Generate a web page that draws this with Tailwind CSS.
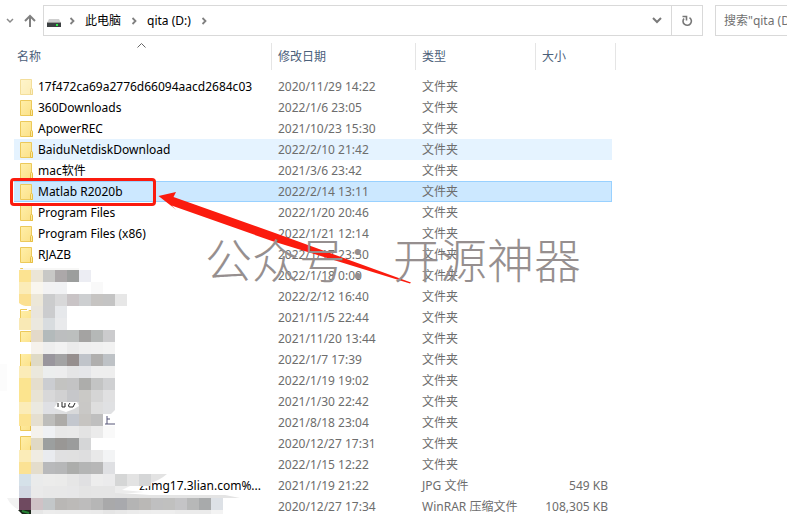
<!DOCTYPE html>
<html lang="zh-CN">
<head>
<meta charset="utf-8">
<title>qita (D:)</title>
<script src="https://cdn.jsdelivr.net/npm/@tailwindcss/browser@4"></script>
</head>
<body class="relative h-screen overflow-hidden bg-white font-['Noto_Sans','Noto_Sans_CJK_SC',sans-serif] text-xs text-black">
<svg class="absolute size-0">
  <defs>
    <linearGradient id="fg" x1="0" y1="0" x2="1" y2="1"><stop offset="0" stop-color="#ffefa9"/><stop offset="1" stop-color="#fbe087"/></linearGradient>
    <symbol id="folder" viewBox="0 0 13 16"><path d="M.5.5h11v9.500l1 1v4.500H.5z" fill="url(#fg)" stroke="#ecc95a"/><path d="M10.500 15.500V10.500q0-1 1-1t1 1v5z" fill="#fde9a0" stroke="#e6bf45"/></symbol>
  </defs>
</svg>

<header class="flex pt-[5px]">
  <nav class="flex w-[43px] shrink-0 items-center gap-2 pl-1.5">
    <button aria-label="最近浏览的位置"><svg class="block" width="8" height="6" viewBox="0 0 8 6" fill="none" stroke="#8a8a8a" stroke-width="1.500"><path d="M1 1l3 3 3-3"/></svg></button>
    <button aria-label="上移"><svg class="block" width="15" height="14" viewBox="0 0 15 14" fill="none" stroke="#808080" stroke-width="2"><path d="M8 13V2M3 7l5-5 5 5"/></svg></button>
  </nav>
  <div class="flex h-[31px] flex-1 items-center border border-[#d9d9d9]">
    <svg class="mt-1 ml-[3px] shrink-0" width="14" height="10" viewBox="0 0 14 10"><path d="M2 1h10l2 4H0z" fill="#cfcfcf"/><path d="M0 4.500h14V9H0z" fill="#3c4042"/><path d="M0 4.500h14" stroke="#999"/><rect x="9" y="6" width="2" height="2" fill="#2eea4a"/></svg>
    <svg class="ml-2 shrink-0" width="6" height="8" viewBox="0 0 6 8" fill="none" stroke="#808080" stroke-width="1.800"><path d="M1.500 1l3 3-3 3"/></svg>
    <a href="#" class="ml-2.5">此电脑</a>
    <svg class="ml-2.5 shrink-0" width="6" height="8" viewBox="0 0 6 8" fill="none" stroke="#808080" stroke-width="1.800"><path d="M1.500 1l3 3-3 3"/></svg>
    <a href="#" class="ml-2.5">qita (D:)</a>
    <svg class="ml-2.5 shrink-0" width="6" height="8" viewBox="0 0 6 8" fill="none" stroke="#808080" stroke-width="1.800"><path d="M1.500 1l3 3-3 3"/></svg>
    <button class="mr-[9px] ml-auto" aria-label="以前的位置"><svg class="block" width="10" height="7" viewBox="0 0 10 7" fill="none" stroke="#7a7a7a" stroke-width="2"><path d="M1 1l4 4 4-4"/></svg></button>
    <button class="flex h-full w-[31px] items-center justify-center border-l border-[#d9d9d9]" aria-label="刷新"><svg width="12" height="12" viewBox="0 0 12 12" fill="none" stroke="#777" stroke-width="1.600"><path d="M8.500 2.600a4.200 4.200 0 1 1-5.500.8M1.500 1.500H5.500V5.500"/></svg></button>
  </div>
  <input aria-label="搜索" placeholder='搜索"qita (D:)"' class="ml-3 h-[31px] w-[72px] shrink-0 border border-r-0 border-[#d9d9d9] pl-2 placeholder:text-[#707070]">
</header>

<main class="relative pt-[7px] pl-3.5">
  <svg class="absolute top-[7px] left-[137px]" width="9" height="5" viewBox="0 0 9 5" fill="none" stroke="#666"><path d="M.5 4.500l4-4 4 4"/></svg>
  <table class="w-[602px] table-fixed border-collapse text-left">
    <colgroup><col class="w-[258px]"><col class="w-[144px]"><col class="w-[120px]"><col class="w-[76px]"><col class="w-1"></colgroup>
    <thead class="text-[#4c607a]">
      <tr class="h-[33px] align-top">
        <th class="p-0 font-normal"><div class="h-[27px] border-r border-[#e5e5e5] pl-[3px] leading-[27px]">名称</div></th>
        <th class="p-0 font-normal"><div class="h-[27px] border-r border-[#e5e5e5] pl-1.5 leading-[27px]">修改日期</div></th>
        <th class="p-0 font-normal"><div class="h-[27px] border-r border-[#e5e5e5] pl-1.5 leading-[27px]">类型</div></th>
        <th class="p-0 font-normal"><div class="h-[27px] pl-1.5 leading-[27px]">大小</div></th>
        <td class="p-0"><div class="h-[27px] border-r border-[#e5e5e5]"></div></td>
      </tr>
    </thead>
    <tbody id="files" class="text-[#6d6d6d]"></tbody>
  </table>
</main>

<svg id="mosaic" class="pointer-events-none absolute top-0 left-0" width="280" height="514" viewBox="0 0 280 514" shape-rendering="crispEdges"></svg>
<div class="pointer-events-none absolute top-[178px] left-[10px] h-[28px] w-[146px] rounded-sm border-3 border-[#fb1b0e]"></div>
<svg class="pointer-events-none absolute top-[185px] left-[155px]" width="260" height="102" viewBox="0 0 260 102"><path d="M3.500 11 21 7l-2.500 5L120 48l136 49.500-1 1L117 56 16.500 20.500 21.500 25z" fill="#fb1b0e"/></svg>
<div class="pointer-events-none absolute top-[223px] left-[205px] font-['Noto_Sans_CJK_SC',sans-serif] text-[47px] leading-[70px] font-light whitespace-nowrap text-[#968f8f]">公众号：开源神器</div>

<script>
const files = [
  ["17f472ca69a2776d66094aacd2684c03", "2020/11/29 14:22"],
  ["360Downloads", "2022/1/6 23:05"],
  ["ApowerREC", "2021/10/23 15:30"],
  ["BaiduNetdiskDownload", "2022/2/10 21:42"],
  ["mac软件", "2021/3/6 23:42"],
  ["Matlab R2020b", "2022/2/14 13:11"],
  ["Program Files", "2022/1/20 20:46"],
  ["Program Files (x86)", "2022/1/21 12:14"],
  ["RJAZB", "2022/1/17 23:50"],
  ["", "2022/1/18 0:00"],
  ["", "2022/2/12 16:40"],
  ["", "2021/11/5 22:44"],
  ["", "2021/11/20 13:44"],
  ["", "2022/1/7 17:39"],
  ["", "2022/1/19 19:02"],
  ["", "2021/1/30 22:42"],
  ["", "2021/8/18 23:04"],
  ["", "2020/12/27 17:31"],
  ["", "2022/1/15 12:22"],
  ["z.img17.3lian.com%...", "2021/1/19 21:22", "JPG 文件", "549 KB"],
  ["", "2020/12/27 17:34", "WinRAR 压缩文件", "108,305 KB"]
];
const rowBg = i => i === 3 ? "bg-[#e5f3ff]" : i === 5 ? "bg-[#cce8ff] shadow-[inset_0_1px_#99d1ff,inset_0_-1px_#99d1ff]" : "";
document.getElementById("files").innerHTML = files.map(([name, date, type = "文件夹", size = ""], i) => {
  const bg = rowBg(i);
  const icon = type === "文件夹" ? `<svg class="${i === 0 ? "opacity-60" : ""} shrink-0" width="13" height="16"><use href="#folder"/></svg>` : "";
  const last = i === 5 ? "bg-[#cce8ff] shadow-[inset_-1px_1px_#99d1ff,inset_0_-1px_#99d1ff]" : bg;
  return `<tr class="h-[21px] leading-5 whitespace-nowrap">
    <td class="p-0 ${bg}"><div class="flex items-center gap-[5px] pl-1.5 text-black ${i === 19 ? "justify-end pr-[11px]" : ""}">${icon}<span>${name}</span></div></td>
    <td class="p-0 pl-1.5 ${bg}">${date}</td>
    <td class="p-0 pl-1.5 ${bg}">${type}</td>
    <td class="p-0 pr-1 text-right ${last}">${size}</td><td class="p-0"></td></tr>`;
}).join("");

// Censoring mosaic over the file names: 12px cells, "-" leaves a cell clear.
const cells = [
  "fce391 ebe5d6 c8c8c6 aca8a9 9c9e9d ecedf3",
  "fbecb8 f9f6ee f2f2f3 f1f2f4 - - f9f9f9",
  "fbe092 ece7d8 cbcccd d8d8d9 c9c4c6 cdcfd1 c6c4c2 c4c4c4 e7e7e7",
  "- e9e5dc cbccce e6e8eb",
  "f9e9b5 ebe8de d8dcdf e9eaec",
  "- e3d9c9 b3babb bcbebf bcbfbe a4a3a2 b5b8b7 cbcbcd",
  "ffffff f6f2ec eeeeee f2f2f2 ebebeb efefef f0f0f0 f2f2f2",
  "- dfdac6 99969d a3a3a4 968f8e c0c4ca b0afae bec2c6",
  "fbecb8 ebe8dc eceeee ededee e5e5e6 e5e6e9 eeeeee eeeeee",
  "fbe490 e5decd cbcdd1 c3c3c1 c3c3c4 adadab c3c4c4 cfd0d2",
  "fce48e e8e3d4 d8d8d9 d1d1d2 c6c7ca cac9c6 d5d5d5 e0e0e1",
  "fbecb8 ebe9e0 dfe0e4 dedfe1 d8d9da c9c8c6 dedede e0e1e3",
  "fce391 e5dfd0 bdbdbb adaba8 c3c7ce c6c4c1 bfbfbf -",
  "- f5f2ec eff1f4 e8e8e8 e9e9e9 e3e3e3 ebebeb f9f9f9",
  "- e0d9c5 9c9f9f 999795 9b9c9c d5d6d7",
  "fbecb8 f0ece2 e9ebef e0e0e1 e0e0e0 dededf e9e9e9 f3f4f5",
  "fbe294 e4ddcc b8b9bb b6b7b8 acadab b4b5b5 b7b7b7 dfe0e3",
  "d5e1e9 eaebeb ececeb ebebea e6e6e6 e0e0e2 ededed ebebec d5d6d6 e3e3e3 d5d6d7",
  "d2d8e3 eaeaea e8e8e8 e8e8e8 e7e7e8 e4e4e4 e5e5e5 e5e5e5",
  "6f4a60 cfc2c6 c3c7c9 b9b7b5 bcbab8 bdbcbc b6b6b6 a9a9aa a8a9ad b4b4b4 bab8b6 bfbfc0 c0c0bf c4c4c6 b7b8b8 a8aaab dde1e6",
  "- e6e6e6 ececec ebebeb ebebeb ebebeb eaeaea e5e5e5 e8e8e8 ebebeb ededed eeeeee eeeeee ebebeb ebebeb ebebeb f3f3f3"
];
let art = '<path d="M24 268h55v2H19z" fill="#f7f7f6"/><path d="M0 364h7v27H0z" fill="#fcfcfc"/>';
cells.forEach((row, r) => row.split(" ").forEach((c, k) => {
  if (c !== "-") art += `<rect x="${19 + k * 12}" y="${270 + r * 12}" width="12" height="12" fill="#${c}"/>`;
}));
art += `<g shape-rendering="auto">
  <path d="M19 303q5 4 12 3v3l-3 2H19z" fill="#fff"/><path d="M20.500 318v-8.500H27" fill="none" stroke="#ecc95a"/>
  <path d="M54 408l4-6h19l2 4-5 3-8 3z" fill="#fff"/><path d="M58 403v4M62 402v5h3v-4M70 403q-3 4 0 4h3l2-4" fill="none" stroke="#222"/>
  <path d="M106 419l9-9v15h-11z" fill="#fff"/><path d="M107 416v8M107 419h3M105 424h10" fill="none" stroke="#557"/>
  <path d="M151 474h16q-7 6-16 9z" fill="#e3e3e3"/><path d="M115 486h15l-8 4 22 2-25 2h-4z" fill="#ececec"/>
  <path d="M115 493l20 1 15 1h75l15 3H115z" fill="#e4e4e4"/>
  <path d="M7 498h12v12q-8-4-12-12z" fill="#f2f2f2"/>
  <path d="M18 510h13v4h-9z" fill="#182418"/><path d="M22 511l7 2" stroke="#278335" stroke-width="2"/></g>`;
document.getElementById("mosaic").innerHTML = art;
</script>
</body>
</html>
